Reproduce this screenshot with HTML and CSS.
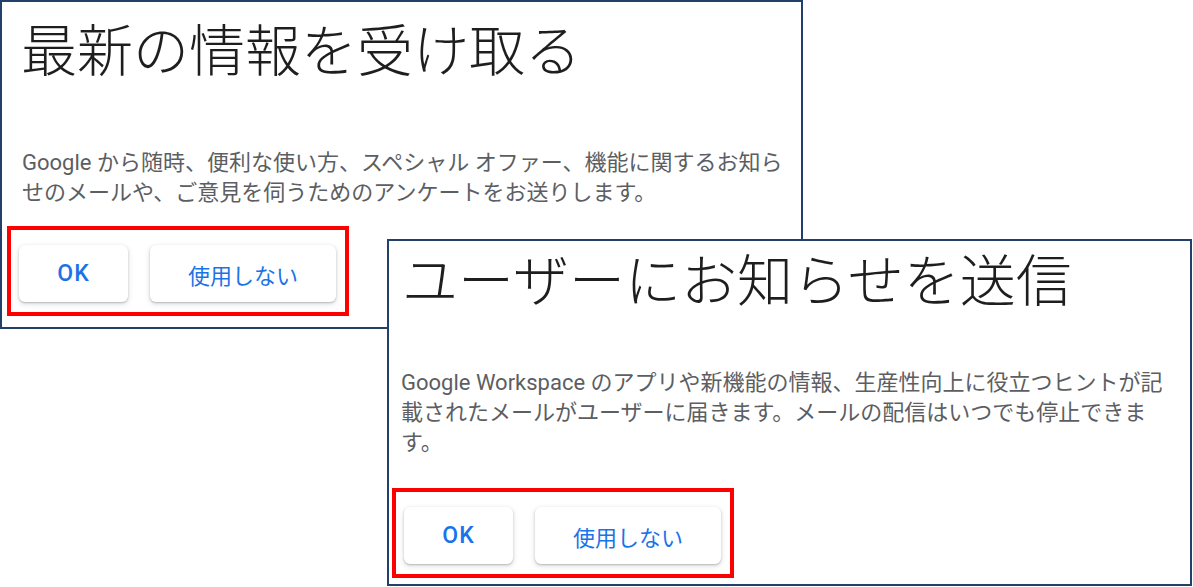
FILE: index.html
```html
<!DOCTYPE html>
<html lang="ja">
<head>
<meta charset="utf-8">
<title>お知らせ設定</title>
<link rel="stylesheet" href="styles.css">
</head>
<body>
<div class="canvas">
  <section class="panel panel-a">
    <h1 class="title">最新の情報を受け取る</h1>
    <p class="desc">Google から随時、便利な使い方、スペシャル オファー、機能に関するお知ら<br>せのメールや、ご意見を伺うためのアンケートをお送りします。</p>
    <div class="actions">
      <button class="btn btn-ok">OK</button>
      <button class="btn btn-no">使用しない</button>
    </div>
  </section>
  <section class="panel panel-b">
    <h1 class="title">ユーザーにお知らせを送信</h1>
    <p class="desc">Google Workspace のアプリや新機能の情報、生産性向上に役立つヒントが記<br>載されたメールがユーザーに届きます。メールの配信はいつでも停止できま<br>す。</p>
    <div class="actions">
      <button class="btn btn-ok">OK</button>
      <button class="btn btn-no">使用しない</button>
    </div>
  </section>
</div>
</body>
</html>
```

FILE: styles.css
```css
* { box-sizing: border-box; }

html, body {
  margin: 0;
  padding: 0;
  background: #ffffff;
}

body {
  width: 1193px;
  height: 587px;
  overflow: hidden;
  font-family: Roboto, "Noto Sans CJK JP", sans-serif;
}

.canvas {
  display: grid;
  grid-template-columns: 1fr;
  grid-template-rows: auto;
  align-items: start;
  justify-items: start;
}

.panel {
  grid-area: 1 / 1;
  display: flex;
  flex-direction: column;
  align-items: flex-start;
  background: #ffffff;
  border: 2px solid #22406a;
}

.panel-a {
  width: 803px;
  height: 329px;
  padding: 17px 0 11px 0;
}

.panel-b {
  width: 805px;
  height: 347px;
  margin-left: 387px;
  margin-top: 239px;
  padding: 8px 0 6px 0;
}

.title {
  margin: 0;
  font-family: "Noto Sans CJK JP", sans-serif;
  font-weight: 300;
  font-size: 56px;
  line-height: 56px;
  height: 56px;
  color: #1e1e1e;
  white-space: nowrap;
}

.desc {
  margin: 0;
  font-family: Roboto, "Noto Sans CJK JP", sans-serif;
  font-size: 22px;
  line-height: 30px;
  color: #5c5e62;
  white-space: nowrap;
}

.panel-a .title { padding-left: 19px; }
.panel-a .desc { padding-left: 20px; margin-top: 73px; }
.panel-a .actions { margin-left: 5px; margin-top: 18px; }

.panel-b .title { padding-left: 13px; }
.panel-b .desc { padding-left: 12px; margin-top: 63px; }
.panel-b .actions { margin-left: 3px; margin-top: 30px; }

.actions {
  display: flex;
  gap: 22px;
  width: 342px;
  height: 90px;
  padding: 15px 9px 10px 8px;
  border: 4px solid #ff0000;
}

.btn {
  height: 57px;
  border: none;
  border-radius: 6px;
  background: #ffffff;
  color: #1a73e8;
  font-family: Roboto, "Noto Sans CJK JP", sans-serif;
  font-size: 22px;
  font-weight: 500;
  box-shadow: 0 1px 2px rgba(60, 64, 67, 0.3), 0 2px 5px 1px rgba(60, 64, 67, 0.12);
  padding: 0;
  cursor: pointer;
}

.btn-ok { width: 109px; font-size: 23px; letter-spacing: 1px; }
.btn-no { width: 186px; font-weight: 400; }
```
